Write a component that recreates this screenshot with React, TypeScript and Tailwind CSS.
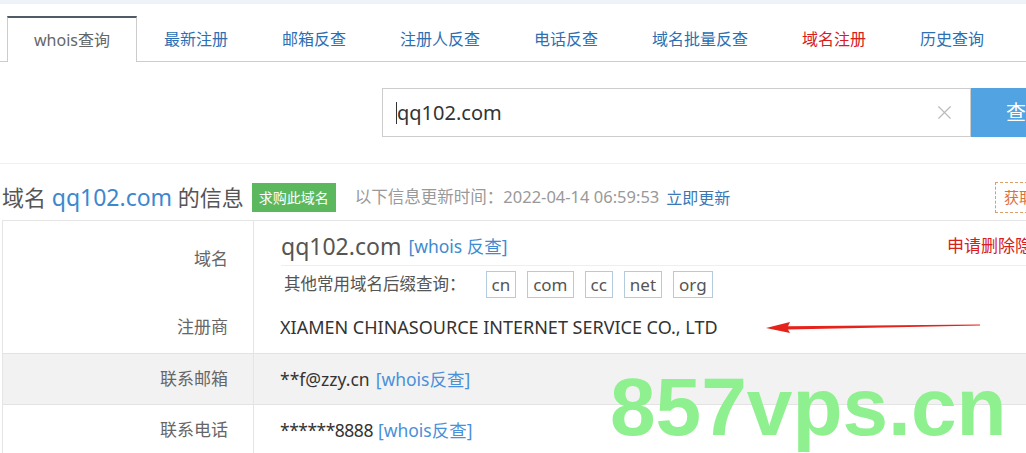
import { X } from "lucide-react";

const tabs = [
  { label: "whois查询", active: true },
  { label: "最新注册" },
  { label: "邮箱反查" },
  { label: "注册人反查" },
  { label: "电话反查" },
  { label: "域名批量反查" },
  { label: "域名注册", red: true },
  { label: "历史查询" },
];

const suffixes = ["cn", "com", "cc", "net", "org"];

const Arrow = () => (
  <svg width="216" height="14" viewBox="0 0 216 14" className="ml-[48px] shrink-0">
    <path d="M0 8 L24 2 L22 6.2 L214 4.6 L214 5.6 L22 9.6 L24 13 Z" fill="#e5231b" />
  </svg>
);

const App = () => {
  return (
    <div className="relative w-[1026px] h-[453px] overflow-hidden bg-white font-['Noto_Sans','Noto_Sans_CJK_SC',sans-serif]">
      <div className="w-[1120px]">
        <div className="h-1 bg-[#eef3f9]" />

        {/* tabs */}
        <div className="mt-3 flex border-b border-[#ccc] pl-[7px]">
          {tabs.map((t) => (
            <div
              key={t.label}
              className={
                t.active
                  ? "-mb-px flex h-[46px] items-center border-x border-t-2 border-x-[#ccc] border-t-[#4f5b66] bg-white px-[26px] text-[16px] text-[#666]"
                  : t.red
                  ? "flex h-[45px] items-center px-[27px] text-[16px] text-[#d7201b]"
                  : "flex h-[45px] items-center px-[27px] text-[16px] text-[#2c70b3]"
              }
            >
              {t.label}
            </div>
          ))}
        </div>

        {/* search */}
        <div className="mt-[26px] ml-[382px] flex h-[49px]">
          <div className="flex w-[589px] items-center border border-[#ccc] pl-[13px] pr-[14px]">
            <span className="h-[22px] w-px bg-[#333]" />
            <span className="text-[20px] text-[#333]">qq102.com</span>
            <X className="ml-auto text-[#bbb]" size={23} strokeWidth={1.2} />
          </div>
          <button className="w-[110px] bg-[#52a3e1] text-[20px] text-white">查询</button>
        </div>

        <div className="mt-[26px] border-t border-[#f0f0f0]" />

        {/* heading */}
        <div className="mt-[18px] flex h-[31px] items-center pl-[2px] pr-[17px]">
          <h1 className="text-[22px] text-[#555]">
            域名 <span className="text-[23px] text-[#3b88cf]">qq102.com</span> 的信息
          </h1>
          <span className="ml-[8px] flex h-[29px] items-center bg-[#5cb85c] px-[7px] text-[14px] text-white">
            求购此域名
          </span>
          <span className="ml-[19px] text-[16.5px] text-[#999]">
            以下信息更新时间：2022-04-14 06:59:53
          </span>
          <span className="ml-[7px] text-[16px] text-[#3a78b5]">立即更新</span>
          <span className="ml-auto flex h-[31px] items-center border border-dashed border-[#d9a06a] px-[8px] text-[15px] text-[#e0703a]">
            获取联系方式
          </span>
        </div>

        {/* table */}
        <div className="mt-[7px] ml-[2px] border-t border-l border-[#e5e5e5]">
          <div className="flex h-[80px]">
            <div className="w-[251px] shrink-0 border-r border-[#e5e5e5] pt-[25px] pr-[25px] text-right text-[17px] text-[#666]">
              域名
            </div>
            <div className="flex-1 pl-[27px]">
              <div className="flex h-[45px] items-center border-b border-[#eee] pt-[6px] pr-[71px]">
                <span className="text-[23px] text-[#555]">qq102.com</span>
                <span className="ml-[7px] text-[17.5px] text-[#3d8bd0]">[whois 反查]</span>
                <span className="ml-auto text-[17px] text-[#d7201b]">申请删除隐私</span>
              </div>
              <div className="mt-[5px] flex items-center">
                <span className="ml-[3px] text-[16.5px] text-[#555]">其他常用域名后缀查询：</span>
                <div className="ml-[20px] flex gap-[11px]">
                  {suffixes.map((s) => (
                    <span
                      key={s}
                      className="flex h-[27px] items-center border border-[#b3cbdc] px-[5px] text-[17px] text-[#555]"
                    >
                      {s}
                    </span>
                  ))}
                </div>
              </div>
            </div>
          </div>

          <div className="flex h-[52px]">
            <div className="flex w-[251px] shrink-0 items-center justify-end border-r border-[#e5e5e5] pr-[25px] text-[17px] text-[#666]">
              注册商
            </div>
            <div className="flex flex-1 items-center pl-[26px]">
              <span className="text-[18px] text-[#333]">XIAMEN CHINASOURCE INTERNET SERVICE CO., LTD</span>
              <Arrow />
            </div>
          </div>

          <div className="flex h-[51px] border-t border-[#e3e3e3] bg-[#f2f2f2]">
            <div className="flex w-[251px] shrink-0 items-center justify-end border-r border-[#e5e5e5] pr-[25px] text-[17px] text-[#666]">
              联系邮箱
            </div>
            <div className="flex flex-1 items-center pl-[26px] text-[17.5px]">
              <span className="text-[#333]">**f@zzy.cn</span>
              <span className="ml-[6px] text-[#4a90d9]">[whois反查]</span>
            </div>
          </div>

          <div className="flex h-[51px] border-t border-[#e3e3e3]">
            <div className="flex w-[251px] shrink-0 items-center justify-end border-r border-[#e5e5e5] pr-[25px] text-[17px] text-[#666]">
              联系电话
            </div>
            <div className="flex flex-1 items-center pl-[26px] text-[17.5px]">
              <span className="tracking-[-0.5px] text-[#333]">******8888</span>
              <span className="ml-[5px] text-[#4a90d9]">[whois反查]</span>
            </div>
          </div>
        </div>
      </div>

      {/* watermark */}
      <div className="pointer-events-none absolute left-[610px] top-[366px] font-['Liberation_Sans',sans-serif] text-[82px] font-bold leading-[82px] text-[#8ff08f]">
        857vps.cn
      </div>
    </div>
  );
};

export default App;
